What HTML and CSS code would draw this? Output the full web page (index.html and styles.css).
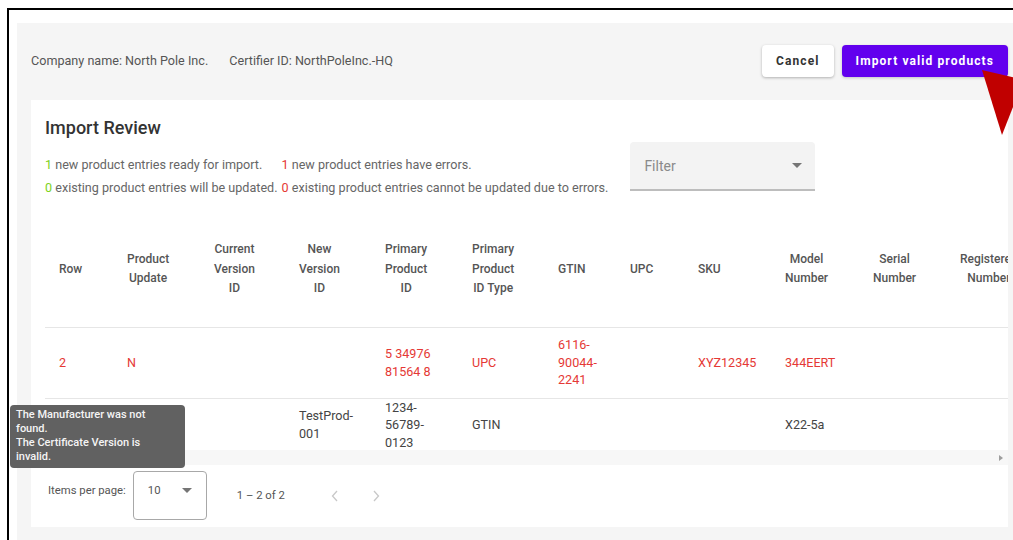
FILE: index.html
```html
<!DOCTYPE html>
<html lang="en">
<head>
<meta charset="utf-8">
<title>Import Review</title>
<link rel="stylesheet" href="styles.css">
</head>
<body>
<div class="frame">
  <div class="panel">
    <header class="topbar">
      <div class="meta">
        <span>Company name: North Pole Inc.</span>
        <span class="meta-gap">Certifier ID: NorthPoleInc.-HQ</span>
      </div>
      <div class="actions">
        <button class="btn btn-cancel">Cancel</button>
        <button class="btn btn-primary">Import valid products</button>
      </div>
    </header>

    <section class="card">
      <h2 class="card-title">Import Review</h2>
      <div class="review-row">
        <div class="summary">
          <span><b class="ok">1</b> new product entries ready for import.</span>
          <span><b class="bad">1</b> new product entries have errors.</span>
          <span><b class="ok">0</b> existing product entries will be updated.</span>
          <span><b class="bad">0</b> existing product entries cannot be updated due to errors.</span>
        </div>
        <div class="filter">
          <span class="filter-label">Filter</span>
          <span class="caret"></span>
        </div>
      </div>

      <div class="table-wrap">
        <table class="grid">
          <colgroup>
            <col style="width:68px"><col style="width:87px"><col style="width:85px"><col style="width:86px">
            <col style="width:87px"><col style="width:86px"><col style="width:72px"><col style="width:68px">
            <col style="width:87px"><col style="width:88px"><col style="width:87px"><col style="width:100px">
          </colgroup>
          <thead>
            <tr>
              <th><span class="th">Row</span></th>
              <th><span class="th">Product<br>Update</span></th>
              <th><span class="th">Current<br>Version<br>ID</span></th>
              <th><span class="th">New<br>Version<br>ID</span></th>
              <th><span class="th">Primary<br>Product<br>ID</span></th>
              <th><span class="th">Primary<br>Product<br>ID Type</span></th>
              <th><span class="th">GTIN</span></th>
              <th><span class="th">UPC</span></th>
              <th><span class="th">SKU</span></th>
              <th><span class="th">Model<br>Number</span></th>
              <th><span class="th">Serial<br>Number</span></th>
              <th><span class="th">Registered<br>Number</span></th>
            </tr>
          </thead>
          <tbody>
            <tr class="row-error row-first">
              <td>2</td>
              <td>N</td>
              <td></td>
              <td></td>
              <td>5 34976 81564 8</td>
              <td>UPC</td>
              <td>6116-<wbr>90044-<wbr>2241</td>
              <td></td>
              <td>XYZ12345</td>
              <td>344EERT</td>
              <td></td>
              <td></td>
            </tr>
            <tr class="row-second">
              <td></td>
              <td></td>
              <td></td>
              <td>TestProd-<wbr>001</td>
              <td>1234-<wbr>56789-<wbr>0123</td>
              <td>GTIN</td>
              <td></td>
              <td></td>
              <td></td>
              <td>X22-5a</td>
              <td></td>
              <td></td>
            </tr>
          </tbody>
        </table>
      </div>
      <div class="hscroll"><span class="hscroll-arrow"></span></div>

      <footer class="paginator">
        <span class="pg-label">Items per page:</span>
        <div class="pg-select">
          <span>10</span>
          <span class="caret"></span>
        </div>
        <span class="pg-range">1 – 2 of 2</span>
        <svg class="pg-nav" width="8" height="12" viewBox="0 0 8 12"><path d="M6 1 L1.5 6 L6 11" fill="none" stroke="#c8c8c8" stroke-width="1.3"/></svg>
        <svg class="pg-nav pg-next" width="8" height="12" viewBox="0 0 8 12"><path d="M2 1 L6.5 6 L2 11" fill="none" stroke="#c8c8c8" stroke-width="1.3"/></svg>
      </footer>
    </section>
  </div>

  <div class="tooltip">The Manufacturer was not<br>found.<br>The Certificate Version is<br>invalid.</div>

  <svg class="pointer" width="45" height="80" viewBox="0 0 45 80">
    <polygon points="7,10 45,19 45,29 27,75" fill="#c00000"/>
  </svg>
</div>
</body>
</html>
```

FILE: styles.css
```css
* {
  box-sizing: border-box;
}

html, body {
  margin: 0;
  height: 100%;
  overflow: hidden;
  background: #ffffff;
  font-family: Roboto, "Liberation Sans", Arial, sans-serif;
}

/* outer frame with black top/left rule */
.frame {
  position: relative;
  margin: 8px 0 0 7px;
  border-top: 2px solid #000;
  border-left: 2px solid #000;
  padding: 13px 0 0 8px;
  height: 600px;
}

.panel {
  width: 1001px;
  background: #f5f5f5;
  padding: 0 10px 0 14px;
  height: 600px;
}

/* top bar */
.topbar {
  height: 77px;
  display: flex;
  align-items: center;
  justify-content: space-between;
}

.meta {
  font-size: 12.6px;
  color: #555;
  margin-top: -2px;
}

.meta-gap {
  margin-left: 18px;
}

.actions {
  display: flex;
  gap: 8px;
  margin-top: -1px;
}

.btn {
  height: 32px;
  border: none;
  border-radius: 4px;
  padding: 0 14px 1px;
  font-family: Roboto, "Liberation Sans", Arial, sans-serif;
  font-size: 12px;
  font-weight: 700;
  letter-spacing: 1.1px;
  cursor: pointer;
}

.btn-cancel {
  background: #fff;
  color: #333;
  box-shadow: 0 1px 3px rgba(0, 0, 0, 0.28);
}

.btn-primary {
  background: #6200ee;
  color: #fff;
  box-shadow: 0 1px 3px rgba(0, 0, 0, 0.2);
}

/* review card */
.card {
  background: #fff;
  padding: 16px 0 0 14px;
  height: 427px;
}

.card-title {
  margin: 0;
  font-size: 18px;
  line-height: 24px;
  font-weight: 500;
  color: #333;
}

.review-row {
  display: flex;
  align-items: flex-start;
  gap: 22px;
  margin-top: 2px;
}

.summary {
  display: grid;
  grid-template-columns: auto auto;
  column-gap: 4px;
  padding-top: 11px;
  font-size: 12.6px;
  line-height: 23px;
  color: #666;
}

.summary b {
  font-weight: 400;
}

.ok {
  color: #7ed321;
}

.bad {
  color: #e53935;
}

.filter {
  width: 185px;
  height: 49px;
  margin-bottom: 16px;
  background: #f3f3f3;
  border-bottom: 2px solid #bdbdbd;
  border-radius: 4px 4px 0 0;
  padding: 0 13px 0 14px;
  display: flex;
  align-items: center;
  justify-content: space-between;
}

.filter-label {
  font-size: 14px;
  color: #8a8a8a;
}

.caret {
  width: 0;
  height: 0;
  border-left: 5px solid transparent;
  border-right: 5px solid transparent;
  border-top: 5px solid #757575;
}

/* table */
.table-wrap {
  width: 963px;
  height: 243px;
  overflow: hidden;
}

.grid {
  table-layout: fixed;
  width: 1001px;
  border-collapse: collapse;
  font-size: 12.6px;
}

.grid th,
.grid td {
  padding: 0 14px;
  text-align: left;
  vertical-align: middle;
  overflow: visible;
}

.grid th {
  padding-top: 5px;
  font-size: 12px;
}

.grid thead tr {
  height: 120px;
  border-bottom: 1px solid #e6e6e6;
}

.th {
  display: inline-block;
  white-space: nowrap;
  text-align: center;
  font-weight: 500;
  color: #555;
  line-height: 19.5px;
}

.grid td {
  color: #444;
  line-height: 17.5px;
  white-space: normal;
}

.row-first {
  height: 71px;
  border-bottom: 1px solid #e6e6e6;
}

.row-second {
  height: 52px;
}

.row-error td {
  color: #e53935;
}

.hscroll {
  width: 963px;
  height: 15px;
  background: #f7f7f7;
  display: flex;
  align-items: center;
  justify-content: flex-end;
  padding-right: 5px;
}

.hscroll-arrow {
  width: 0;
  height: 0;
  border-top: 3.5px solid transparent;
  border-bottom: 3.5px solid transparent;
  border-left: 4px solid #9e9e9e;
}

/* paginator */
.paginator {
  display: flex;
  align-items: center;
  height: 49px;
  margin-top: 6px;
  padding-left: 3px;
  font-size: 11.3px;
  color: #555;
}

.pg-label {
  margin-bottom: 10px;
}

.pg-select {
  margin-left: 7px;
  width: 74px;
  height: 49px;
  border: 1px solid #a8a8a8;
  border-radius: 4px;
  padding: 12px 14px 0 14px;
  display: flex;
  align-items: flex-start;
  justify-content: space-between;
  line-height: 13px;
  color: #555;
}

.pg-select .caret {
  margin-top: 4px;
}

.pg-range {
  margin-left: 30px;
}

.pg-nav {
  margin-left: 46px;
}

.pg-nav.pg-next {
  margin-left: 33px;
}

/* overlays */
.tooltip {
  position: absolute;
  left: 1px;
  top: 395px;
  width: 175px;
  padding: 3px 6px 4px 6px;
  background: #616161;
  border-radius: 4px;
  color: #f5f5f5;
  font-size: 11px;
  font-weight: 500;
  line-height: 14px;
}

.pointer {
  position: absolute;
  left: 966px;
  top: 50px;
}
```
